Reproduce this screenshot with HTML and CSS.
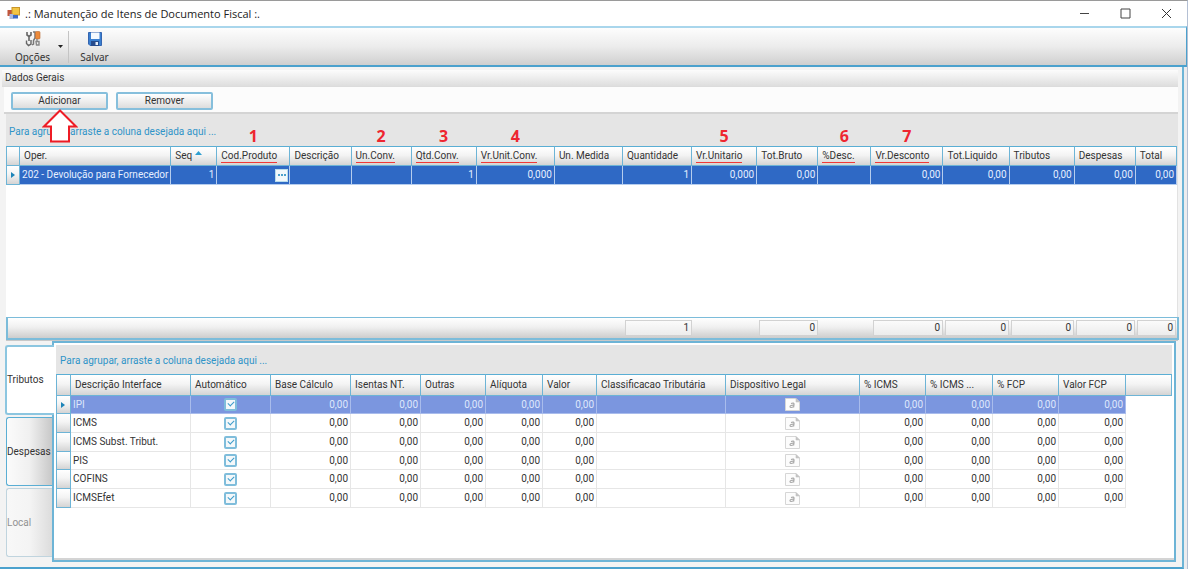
FILE: index.html
```html
<!DOCTYPE html>
<html lang="pt-BR">
<head>
<meta charset="utf-8">
<title>.: Manutenção de Itens de Documento Fiscal :.</title>
<link rel="stylesheet" href="styles.css">
</head>
<body>
<svg class="defs" aria-hidden="true">
  <symbol id="note" viewBox="0 0 15 13">
    <path d="M.5 .5H11L14.5 4V12.500H.5Z" fill="#fcfcfc" stroke="#d6d6d6"/>
    <path d="M11 .5V4H14.500Z" fill="#c4c4c4" stroke="#c4c4c4" stroke-width=".6"/>
    <path d="M6 5.500Q9.300 4.200 9 6.500L8.600 9.500M8.800 7.200Q5 7 5 8.800Q5.400 10.200 8.600 8.800" fill="none" stroke="#a8a8a8" stroke-width="1.200"/>
  </symbol>
</svg>
<div class="window">
  <header class="titlebar">
    <svg class="app-icon" width="13" height="13" viewBox="0 0 13 13"><rect x=".5" y="3" width="5" height="6" fill="#c0563c"/><rect x="5" y=".5" width="7.500" height="7.500" fill="#f3c544" stroke="#c9962a"/><rect x="2.500" y="7" width="4" height="5" fill="#a9b9e0"/><rect x="6" y="8" width="5" height="3.500" fill="#3d6ac5"/></svg>
    <h1>.: Manutenção de Itens de Documento Fiscal :.</h1>
    <div class="window-buttons">
      <button type="button" aria-label="Minimizar"><svg width="11" height="11" viewBox="0 0 11 11"><path d="M1 5.500H10" stroke="#444" fill="none"/></svg></button>
      <button type="button" aria-label="Maximizar"><svg width="11" height="11" viewBox="0 0 11 11"><path d="M1 1H10V10H1Z" stroke="#444" fill="none"/></svg></button>
      <button type="button" aria-label="Fechar"><svg width="11" height="11" viewBox="0 0 11 11"><path d="M1 1L10 10M10 1L1 10" stroke="#333" fill="none"/></svg></button>
    </div>
  </header>
  <nav class="toolbar">
    <button type="button" class="tool">
      <svg width="16" height="16" viewBox="0 0 16 16"><path d="M2 1V4L4 5.500L6 4V1M4 5V10" fill="none" stroke="#666" stroke-width="1.600"/><path d="M1.500 9.500V12.500L3.500 14.500L6 13V9" fill="none" stroke="#666" stroke-width="1.400"/><path d="M8 1H10V7L8.500 9.500V13L7 14" fill="none" stroke="#777" stroke-width="1.500"/><rect x="10.500" y=".5" width="4.500" height="7.500" rx="1" fill="#ec8a3a" stroke="#b86a30" stroke-width=".6"/><path d="M12 8V10M11 10.500H14V14H11.500Z" fill="none" stroke="#888" stroke-width="1.400"/></svg>
      <span>Opções</span>
    </button>
    <button type="button" class="drop" aria-label="Mais opções"><svg width="5" height="3" viewBox="0 0 5 3"><path d="M0 0H5L2.500 3Z" fill="#222"/></svg></button>
    <span class="separator"></span>
    <button type="button" class="tool">
      <svg width="16" height="16" viewBox="0 0 16 16"><path d="M1.500 1.500H14.500V14.500H3L1.500 13Z" fill="#3a7fd0" stroke="#3565b0"/><rect x="4" y="1.500" width="8.500" height="6.500" fill="#f4faff"/><rect x="4" y="10" width="8" height="5" fill="#274b8c"/><rect x="8.500" y="11" width="2.500" height="3" fill="#e8f0fa"/></svg>
      <span>Salvar</span>
    </button>
  </nav>
  <main class="content">
    <h2 class="group-title">Dados Gerais</h2>
    <div class="actions">
      <button type="button" class="action">Adicionar
        <svg class="pointer" width="36" height="34" viewBox="0 0 36 34"><path d="M18 1.500L34 17.500H27V32.500H9V17.500H2Z" fill="#fff" stroke="#ee1c25" stroke-width="2"/></svg>
      </button>
      <button type="button" class="action">Remover</button>
    </div>
    <section class="items">
      <p class="group-hint">Para agrupar, arraste a coluna desejada aqui ...</p>
      <div class="items-body">
        <table class="grid items-grid">
          <colgroup><col class="w14"><col class="w151"><col class="w46"><col class="w73"><col class="w61"><col class="w60"><col class="w65"><col class="w78"><col class="w68"><col class="w69"><col class="w65"><col class="w61"><col class="w53"><col class="w72"><col class="w66"><col class="w65"><col class="w61"><col class="w41"></colgroup>
          <thead><tr>
            <th></th><th>Oper.</th>
            <th>Seq <svg width="7" height="4" viewBox="0 0 7 4" class="sort"><path d="M0 4L3.500 0L7 4Z" fill="#2f9fd0"/></svg></th>
            <th><span class="marked">Cod.Produto</span><b class="step">1</b></th>
            <th>Descrição</th>
            <th><span class="marked">Un.Conv.</span><b class="step">2</b></th>
            <th><span class="marked">Qtd.Conv.</span><b class="step">3</b></th>
            <th><span class="marked">Vr.Unit.Conv.</span><b class="step">4</b></th>
            <th>Un. Medida</th><th>Quantidade</th>
            <th><span class="marked">Vr.Unitario</span><b class="step">5</b></th>
            <th>Tot.Bruto</th>
            <th><span class="marked">%Desc.</span><b class="step">6</b></th>
            <th><span class="marked">Vr.Desconto</span><b class="step">7</b></th>
            <th>Tot.Liquido</th><th>Tributos</th><th>Despesas</th><th>Total</th>
          </tr></thead>
          <tbody><tr class="selected">
            <th class="indicator"><svg width="4" height="6" viewBox="0 0 4 6"><path d="M0 0L4 3L0 6Z" fill="#1c84b8"/></svg></th>
            <td>202 - Devolução para Fornecedor</td><td class="num">1</td>
            <td class="lookup"><button type="button" aria-label="Procurar produto"><i></i><i></i><i></i></button></td>
            <td></td><td></td><td class="num">1</td><td class="num">0,000</td><td></td><td class="num">1</td><td class="num">0,000</td><td class="num">0,00</td><td></td><td class="num">0,00</td><td class="num">0,00</td><td class="num">0,00</td><td class="num">0,00</td><td class="num">0,00</td>
          </tr></tbody>
        </table>
      </div>
      <table class="summary">
        <colgroup><col class="w14"><col class="w151"><col class="w46"><col class="w73"><col class="w61"><col class="w60"><col class="w65"><col class="w78"><col class="w68"><col class="w69"><col class="w65"><col class="w61"><col class="w53"><col class="w72"><col class="w66"><col class="w65"><col class="w61"><col class="w41"></colgroup>
        <tbody><tr><td colspan="9"></td><td><output>1</output></td><td></td><td><output>0</output></td><td></td><td><output>0</output></td><td><output>0</output></td><td><output>0</output></td><td><output>0</output></td><td><output>0</output></td></tr></tbody>
      </table>
    </section>
    <section class="details">
      <div class="tabs" role="tablist">
        <button type="button" role="tab" class="tab active" aria-selected="true">Tributos</button>
        <button type="button" role="tab" class="tab">Despesas</button>
        <button type="button" role="tab" class="tab off" disabled>Local</button>
      </div>
      <div class="tab-panel">
        <p class="group-hint">Para agrupar, arraste a coluna desejada aqui ...</p>
        <table class="grid tax-grid">
          <colgroup><col class="w15"><col class="w120"><col class="w80"><col class="w80"><col class="w70"><col class="w65"><col class="w57"><col class="w54"><col class="w129"><col class="w134"><col class="w66"><col class="w67"><col class="w66"><col class="w67"><col class="w46"></colgroup>
          <thead><tr><th></th><th>Descrição Interface</th><th>Automático</th><th>Base Cálculo</th><th>Isentas NT.</th><th>Outras</th><th>Alíquota</th><th>Valor</th><th>Classificacao Tributária</th><th>Dispositivo Legal</th><th>% ICMS</th><th>% ICMS ...</th><th>% FCP</th><th>Valor FCP</th><th></th></tr></thead>
          <tbody>
            <tr class="current"><th class="indicator"><svg width="4" height="6" viewBox="0 0 4 6"><path d="M0 0L4 3L0 6Z" fill="#1c84b8"/></svg></th><td>IPI</td><td class="mid"><input type="checkbox" checked aria-label="IPI automático"></td><td class="num">0,00</td><td class="num">0,00</td><td class="num">0,00</td><td class="num">0,00</td><td class="num">0,00</td><td></td><td class="mid"><svg width="15" height="13"><use href="#note"/></svg></td><td class="num">0,00</td><td class="num">0,00</td><td class="num">0,00</td><td class="num">0,00</td><td class="blank"></td></tr>
            <tr><th></th><td>ICMS</td><td class="mid"><input type="checkbox" checked aria-label="ICMS automático"></td><td class="num">0,00</td><td class="num">0,00</td><td class="num">0,00</td><td class="num">0,00</td><td class="num">0,00</td><td></td><td class="mid"><svg width="15" height="13"><use href="#note"/></svg></td><td class="num">0,00</td><td class="num">0,00</td><td class="num">0,00</td><td class="num">0,00</td><td class="blank"></td></tr>
            <tr><th></th><td>ICMS Subst. Tribut.</td><td class="mid"><input type="checkbox" checked aria-label="ICMS Subst. Tribut. automático"></td><td class="num">0,00</td><td class="num">0,00</td><td class="num">0,00</td><td class="num">0,00</td><td class="num">0,00</td><td></td><td class="mid"><svg width="15" height="13"><use href="#note"/></svg></td><td class="num">0,00</td><td class="num">0,00</td><td class="num">0,00</td><td class="num">0,00</td><td class="blank"></td></tr>
            <tr><th></th><td>PIS</td><td class="mid"><input type="checkbox" checked aria-label="PIS automático"></td><td class="num">0,00</td><td class="num">0,00</td><td class="num">0,00</td><td class="num">0,00</td><td class="num">0,00</td><td></td><td class="mid"><svg width="15" height="13"><use href="#note"/></svg></td><td class="num">0,00</td><td class="num">0,00</td><td class="num">0,00</td><td class="num">0,00</td><td class="blank"></td></tr>
            <tr><th></th><td>COFINS</td><td class="mid"><input type="checkbox" checked aria-label="COFINS automático"></td><td class="num">0,00</td><td class="num">0,00</td><td class="num">0,00</td><td class="num">0,00</td><td class="num">0,00</td><td></td><td class="mid"><svg width="15" height="13"><use href="#note"/></svg></td><td class="num">0,00</td><td class="num">0,00</td><td class="num">0,00</td><td class="num">0,00</td><td class="blank"></td></tr>
            <tr><th></th><td>ICMSEfet</td><td class="mid"><input type="checkbox" checked aria-label="ICMSEfet automático"></td><td class="num">0,00</td><td class="num">0,00</td><td class="num">0,00</td><td class="num">0,00</td><td class="num">0,00</td><td></td><td class="mid"><svg width="15" height="13"><use href="#note"/></svg></td><td class="num">0,00</td><td class="num">0,00</td><td class="num">0,00</td><td class="num">0,00</td><td class="blank"></td></tr>
          </tbody>
        </table>
      </div>
    </section>
  </main>
</div>
</body>
</html>
```
FILE: styles.css
```css
* { box-sizing: border-box; }
body {
  margin: 0;
  color: #333;
  font: 10px/12px Roboto, "Noto Sans", sans-serif;
}
button { font: inherit; color: inherit; border: 0; background: none; padding: 0; }
h1, h2, p { margin: 0; font-weight: normal; }
svg { display: block; }
.defs { position: absolute; width: 0; height: 0; }

.window {
  min-height: 100vh;
  display: flex;
  flex-direction: column;
  border-top: 1px solid #9a9a9a;
  border-right: 1px solid #b4c0d4;
  background: #ececee;
}
.titlebar {
  display: flex;
  align-items: center;
  gap: 5px;
  height: 25px;
  padding-left: 7px;
  background: #fff;
}
.titlebar h1 { flex: 1; font: 11px/16px "Open Sans", sans-serif; color: #222; }
.window-buttons { display: flex; gap: 30px; padding-right: 15px; }

.toolbar {
  display: flex;
  align-items: center;
  height: 41px;
  padding-left: 11px;
  border-top: 2px solid #a9d6ec;
  border-bottom: 2px solid #4ba1cd;
  border-right: 1px solid #4ba1cd;
  background: linear-gradient(#fdfdfd, #ececec 50%, #cfcfcf);
}
.tool {
  display: flex;
  flex-direction: column;
  align-items: center;
  gap: 4px;
  width: 43px;
  font: 10px/12px "Noto Sans", sans-serif;
}
.drop { width: 12px; display: flex; justify-content: center; }
.separator { width: 1px; height: 32px; margin: 0 4px 0 2px; background: #c4c4c4; }

.content {
  flex: 1;
  display: flex;
  flex-direction: column;
  margin-right: 3px;
  padding: 3px 4px 5px 2px;
  border-right: 2px solid #6db4d6;
  border-bottom: 2px solid #4ba1cd;
  background: #f3f3f3;
}
.group-title {
  height: 17px;
  padding-left: 3px;
  font-size: 10px;
  line-height: 16px;
  background: linear-gradient(#fcfcfc, #dedede);
  border-bottom: 1px solid #dcdcdc;
}
.actions {
  display: flex;
  gap: 8px;
  height: 27px;
  margin-left: 2px;
  padding: 5px 7px;
  border-bottom: 2px solid #d4d4d4;
  background: #fcfcfc;
}
.action {
  position: relative;
  width: 97px;
  height: 18px;
  border: 2px solid #86bfdc;
  border-radius: 2px;
  background: linear-gradient(#fff, #ddd);
}
.pointer { position: absolute; left: 29px; top: 15px; z-index: 2; }

.items { display: flex; flex-direction: column; margin-left: 4px; flex: 0 0 227px; border-bottom: 1px solid #c8c8c8; }
.group-hint { padding: 0 3px; background: #e5e5e5; color: #2f94c8; }
.items > .group-hint { height: 32px; line-height: 36px; }
.items-body { flex: 1; background: #fff; padding-bottom: 1px; border-right: 1px solid #e2e2e2; }

.grid { width: 100%; table-layout: fixed; border-collapse: separate; border-spacing: 0; background: #fff; }
.grid th, .grid td {
  height: 19px;
  padding: 0 2px;
  text-align: left;
  font-weight: normal;
  white-space: nowrap;
  line-height: 12px;
}
.grid th {
  background: linear-gradient(#fff, #f4f4f4 45%, #d4d4d4);
  border-right: 1px solid #6db4d6;
  border-bottom: 1px solid #6db4d6;
}
.grid thead th { position: relative; height: 20px; padding: 0 0 0 4px; border-top: 1px solid #5aaed4; }
.grid th:first-child { border-left: 1px solid #6db4d6; }
.grid td { border-right: 1px solid #e6e6e6; border-bottom: 1px solid #e6e6e6; }
.grid .num { text-align: right; }
.grid .indicator { padding-left: 4px; }
.sort { display: inline-block; vertical-align: 4px; }
.marked { display: inline-block; box-shadow: 0 1px #f03838; }
.step {
  position: absolute;
  left: 0;
  right: 0;
  top: -20px;
  text-align: center;
  color: #ee2630;
  font: bold 16px/18px "Open Sans", sans-serif;
}
.grid .selected td { background: #2f69c5; color: #e6efff; border-color: #b5cdee; }
.grid .lookup { padding: 0 1px; }
.lookup button {
  display: flex;
  align-items: center;
  justify-content: center;
  gap: 1px;
  width: 13px;
  height: 13px;
  margin-left: auto;
  border: 1px solid #b8dcec;
  background: #f2f8fb;
}
.lookup i { width: 2px; height: 2px; background: #4ba1cd; }

.summary {
  width: 100%;
  height: 23px;
  table-layout: fixed;
  border-collapse: separate;
  border-spacing: 0;
  border: 2px solid #7cbcda;
  border-top-width: 1px;
  background: linear-gradient(#fff, #f0f0f0 45%, #cdcdcd);
}
.summary td { padding: 0 1px; }
.summary output {
  display: block;
  height: 16px;
  padding-right: 2px;
  line-height: 14px;
  text-align: right;
  border: 1px solid #d2d2d2;
  background: linear-gradient(#fbfbfb, #ececec);
}

.details { flex: 1; display: flex; padding: 0 2px 0 2px; }
.tabs { display: flex; flex-direction: column; width: 48px; padding-top: 4px; gap: 2px; align-items: flex-end; }
.tab {
  width: 46px;
  height: 69px;
  text-align: left;
  border: 1px solid #5aaed4;
  border-right: 0;
  border-radius: 3px 0 0 3px;
  background: linear-gradient(90deg, #fbfbfb, #f0f0f0 50%, #c8c8c8);
}
.tab.active { width: 49px; height: 70px; border-width: 2px; border-right: 0; border-color: #8cc6e0; background: #fff; margin-right: -2px; z-index: 1; }
.tab.off { border-color: #c0d4de; color: #929292; background: linear-gradient(90deg, #f8f8f8, #f4f4f4 50%, #dcdcdc); }
.tab-panel {
  flex: 1;
  min-width: 0;
  padding: 2px 2px 0;
  border: 2px solid #6db4d6;
  background: #fff;
  box-shadow: inset 0 -2px #d4d4d4;
}
.tab-panel .group-hint { height: 29px; line-height: 32px; padding: 0 4px; }
.tax-grid thead th { height: 22px; }
.tax-grid tbody tr:nth-child(3n+1) > * { height: 18px; }
.tax-grid .current td { background: #7b96df; color: #dfe7fb; border-color: #a9bcec; }
.tax-grid tbody .blank, .tax-grid tbody .current .blank { border: 0; background: #fff; }
.mid > * { display: block; margin: 0 auto; }
.mid input {
  appearance: none;
  width: 13px;
  height: 13px;
  margin: 0 auto;
  padding: 2px 3px;
  border: 2px solid #7fbddb;
  border-radius: 2px;
  background: #f4f8fa;
}
.mid input::before {
  content: "";
  display: block;
  width: 3px;
  height: 5px;
  margin-top: -2px;
  border: solid #3c9ccb;
  border-width: 0 1px 1px 0;
  rotate: 45deg;
}

.w14 { width: 14px; } .w15 { width: 15px; } .w41 { width: 41px; } .w46 { width: 46px; }
.w53 { width: 53px; } .w54 { width: 54px; } .w57 { width: 57px; } .w60 { width: 60px; }
.w61 { width: 61px; } .w65 { width: 65px; } .w66 { width: 66px; } .w67 { width: 67px; }
.w68 { width: 68px; } .w69 { width: 69px; } .w70 { width: 70px; } .w72 { width: 72px; }
.w73 { width: 73px; } .w78 { width: 78px; } .w80 { width: 80px; } .w120 { width: 120px; }
.w129 { width: 129px; } .w134 { width: 134px; } .w151 { width: 151px; }
```
